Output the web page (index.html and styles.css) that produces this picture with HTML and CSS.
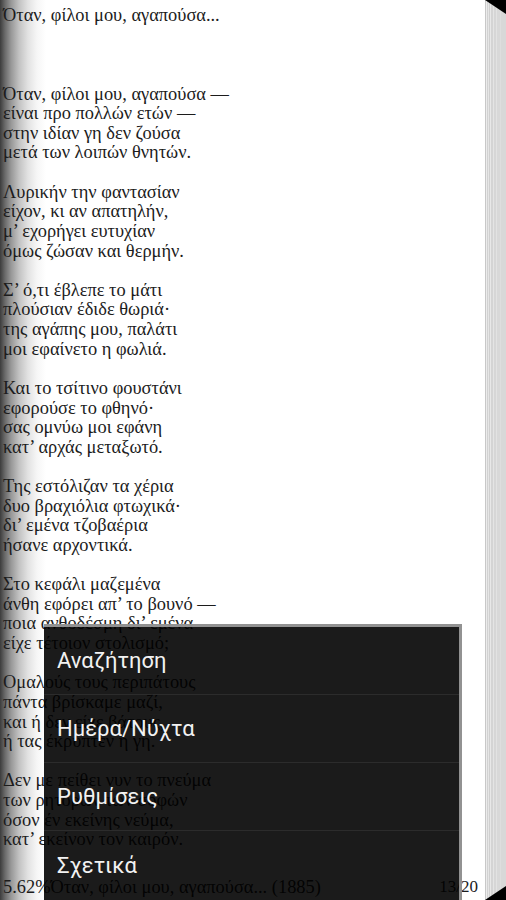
FILE: index.html
```html
<!DOCTYPE html>
<html lang="el">
<head>
<meta charset="utf-8">
<title>Όταν, φίλοι μου, αγαπούσα...</title>
<link rel="stylesheet" href="styles.css">
</head>
<body>
<div class="screen">
  <div class="book">
    <div class="page">
      <div class="text">
        <p class="line">Όταν, φίλοι μου, αγαπούσα...</p>
        <p class="line blank">&nbsp;</p>
        <p class="line blank">&nbsp;</p>
        <p class="line blank">&nbsp;</p>
        <p class="line">Όταν, φίλοι μου, αγαπούσα —</p>
        <p class="line">είναι προ πολλών ετών —</p>
        <p class="line">στην ιδίαν γη δεν ζούσα</p>
        <p class="line">μετά των λοιπών θνητών.</p>
        <p class="line blank">&nbsp;</p>
        <p class="line">Λυρικήν την φαντασίαν</p>
        <p class="line">είχον, κι αν απατηλήν,</p>
        <p class="line">μ’ εχορήγει ευτυχίαν</p>
        <p class="line">όμως ζώσαν και θερμήν.</p>
        <p class="line blank">&nbsp;</p>
        <p class="line">Σ’ ό,τι έβλεπε το μάτι</p>
        <p class="line">πλούσιαν έδιδε θωριά·</p>
        <p class="line">της αγάπης μου, παλάτι</p>
        <p class="line">μοι εφαίνετο η φωλιά.</p>
        <p class="line blank">&nbsp;</p>
        <p class="line">Και το τσίτινο φουστάνι</p>
        <p class="line">εφορούσε το φθηνό·</p>
        <p class="line">σας ομνύω μοι εφάνη</p>
        <p class="line">κατ’ αρχάς μεταξωτό.</p>
        <p class="line blank">&nbsp;</p>
        <p class="line">Της εστόλιζαν τα χέρια</p>
        <p class="line">δυο βραχιόλια φτωχικά·</p>
        <p class="line">δι’ εμένα τζοβαέρια</p>
        <p class="line">ήσανε αρχοντικά.</p>
        <p class="line blank">&nbsp;</p>
        <p class="line">Στο κεφάλι μαζεμένα</p>
        <p class="line">άνθη εφόρει απ’ το βουνό —</p>
        <p class="line">ποια ανθοδέσμη δι’ εμένα</p>
        <p class="line">είχε τέτοιον στολισμό;</p>
        <p class="line blank">&nbsp;</p>
        <p class="line">Ομαλούς τους περιπάτους</p>
        <p class="line">πάντα βρίσκαμε μαζί,</p>
        <p class="line">και ή δεν είχε βάτους,</p>
        <p class="line">ή τας έκρυπτεν η γη.</p>
        <p class="line blank">&nbsp;</p>
        <p class="line">Δεν με πείθει νυν το πνεύμα</p>
        <p class="line">των ρητόρων των σοφών</p>
        <p class="line">όσον έν εκείνης νεύμα,</p>
        <p class="line">κατ’ εκείνον τον καιρόν.</p>
      </div>
      <div class="status">
        <span class="status-title">5.62%Όταν, φίλοι μου, αγαπούσα... (1885)</span>
        <span class="status-page">13/20</span>
      </div>
    </div>
    <div class="edges"></div>
  </div>

  <svg class="corner corner-top" width="21" height="14" viewBox="0 0 21 14" aria-hidden="true">
    <polygon points="0,0 21,0 21,14" fill="#000"/>
  </svg>
  <svg class="corner corner-bottom" width="21" height="14" viewBox="0 0 21 14" aria-hidden="true">
    <polygon points="0,14 21,0 21,14" fill="#000"/>
  </svg>

  <div class="menu">
    <div class="menu-item">Αναζήτηση</div>
    <div class="menu-item">Ημέρα/Νύχτα</div>
    <div class="menu-item">Ρυθμίσεις</div>
    <div class="menu-item">Σχετικά</div>
  </div>
</div>
</body>
</html>
```

FILE: styles.css
```css
* {
  box-sizing: border-box;
}

html, body {
  margin: 0;
  padding: 0;
  background: #ffffff;
}

.screen {
  position: relative;
  width: 506px;
  height: 900px;
  overflow: hidden;
}

.book {
  display: flex;
  flex-direction: row;
  height: 900px;
}

.page {
  flex: 1;
  display: flex;
  flex-direction: column;
  background: linear-gradient(to right,
    #3c3c3c 0px,
    #6a6a6a 5px,
    #979797 11px,
    #c2c2c2 19px,
    #e2e2e2 28px,
    #f6f6f6 37px,
    #ffffff 46px);
  font-family: "Liberation Serif", "Times New Roman", serif;
  color: #1c1c1c;
}

.text {
  flex: 1;
  padding: 6px 0 0 3px;
  font-size: 18.4px;
}

.line {
  margin: 0;
  line-height: 19.64px;
  height: 19.64px;
  white-space: nowrap;
}

.status {
  display: flex;
  justify-content: space-between;
  align-items: center;
  padding: 0 7px 1px 3px;
  height: 26px;
  font-size: 18.4px;
  line-height: 20px;
}

.status-page {
  font-size: 17px;
}

.edges {
  width: 21px;
  flex: none;
  background: linear-gradient(to right,
    #c8c8c8 0px, #c8c8c8 1px,
    #ececec 1px, #ececec 2px,
    #d2d2d2 2px, #d2d2d2 3px,
    #e6e6e6 3px, #e6e6e6 4px,
    #cfcfcf 4px, #cfcfcf 5px,
    #e8e8e8 5px, #e8e8e8 6px,
    #d4d4d4 6px, #d4d4d4 8px,
    #e4e4e4 8px, #e4e4e4 9px,
    #d6d6d6 9px, #d6d6d6 11px,
    #e2e2e2 11px, #e2e2e2 12px,
    #d8d8d8 12px, #d8d8d8 15px,
    #dedede 15px, #dedede 16px,
    #d8d8d8 16px, #d8d8d8 21px);
}

.corner {
  position: absolute;
  right: 0;
  display: block;
}

.corner-top {
  top: 0;
}

.corner-bottom {
  bottom: 0;
}

.menu {
  position: absolute;
  left: 44px;
  top: 624px;
  width: 418px;
  height: 276px;
  background: rgba(0, 0, 0, 0.895);
  border-top: 3px solid rgba(160, 160, 160, 0.9);
  border-right: 3px solid rgba(160, 160, 160, 0.9);
  display: flex;
  flex-direction: column;
  font-family: Roboto, "Noto Sans", "DejaVu Sans", sans-serif;
}

.menu-item {
  height: 68px;
  flex: none;
  display: flex;
  align-items: center;
  padding-left: 13px;
  color: #f2f2f2;
  font-size: 22px;
  border-bottom: 1px solid rgba(255, 255, 255, 0.08);
}

.menu-item:last-child {
  border-bottom: none;
}
```
